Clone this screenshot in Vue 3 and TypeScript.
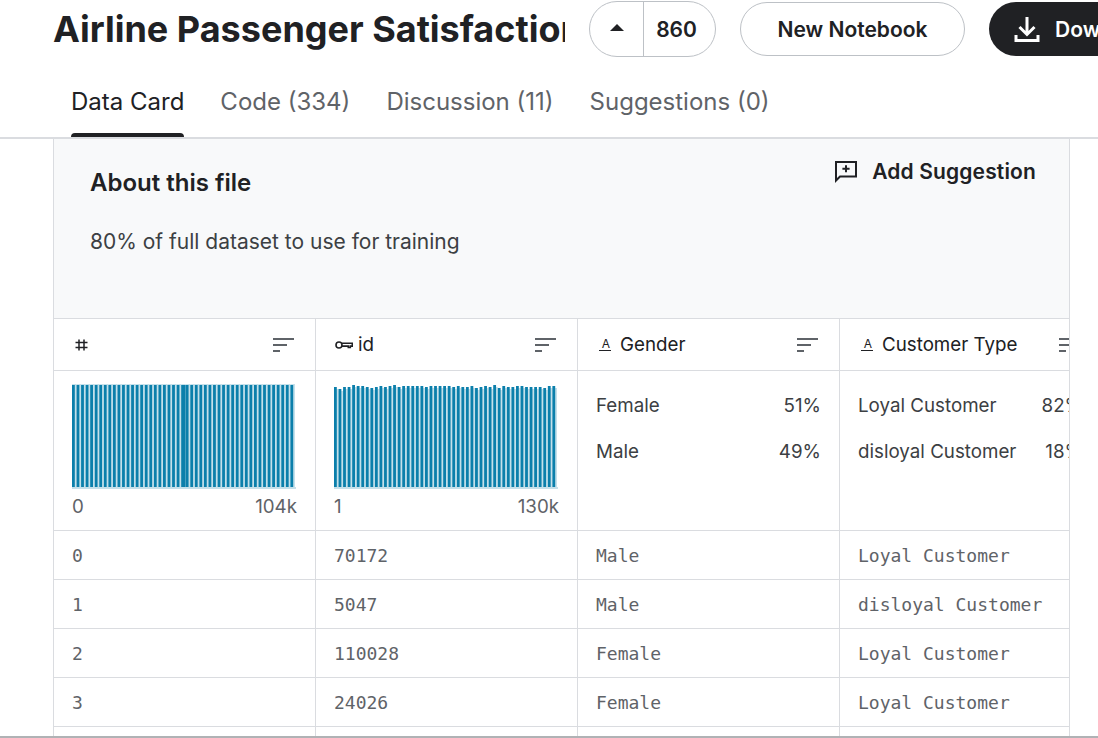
<template>
  <div class="page">
    <header class="top">
      <h1 class="title">Airline Passenger Satisfaction</h1>
      <div class="vote">
        <button class="vote-up"><span class="caret"></span></button>
        <span class="vote-count">860</span>
      </div>
      <button class="btn-outline">New Notebook</button>
      <button class="btn-dark">
        <svg class="dl-icon" viewBox="0 0 28 28" fill="none" stroke="#fff" stroke-width="3">
          <path d="M14 2v17M6.500 12l7.500 7.500 7.500-7.500" />
          <path d="M3 20v5.500h22V20" />
        </svg>
        <span>Download</span>
      </button>
    </header>

    <nav class="tabs">
      <a v-for="(tab, i) in tabs" :key="tab" class="tab" :class="{ active: i === 0 }">{{ tab }}</a>
    </nav>

    <section class="card">
      <div class="about">
        <div class="about-head">
          <h2>About this file</h2>
          <button class="suggest">
            <svg class="suggest-icon" viewBox="0 0 24 24" fill="none" stroke="#202124" stroke-width="2">
              <path d="M2 2h20v14.500H6l-4 4z" />
              <path d="M12 5.200v7M8.400 8.700h7.200" />
            </svg>
            <span>Add Suggestion</span>
          </button>
        </div>
        <p>80% of full dataset to use for training</p>
      </div>

      <div class="table">
        <div class="cell head">
          <svg class="type-icon" viewBox="0 0 18 12" fill="none" stroke="#202124" stroke-width="1.500">
            <path d="M6 0.500v11M11 0.500v11M2.500 3.500h12M2.500 8.500h12" />
          </svg>
          <span class="sort"><i></i><i></i><i></i></span>
        </div>
        <div class="cell head">
          <svg class="type-icon" viewBox="0 0 18 12" fill="none" stroke="#202124" stroke-width="1.600">
            <circle cx="4" cy="6" r="3" />
            <path d="M7 4.200h10.300v2.900h-2v1.400h-2V7.100H7" />
          </svg>
          <span class="name">id</span>
          <span class="sort"><i></i><i></i><i></i></span>
        </div>
        <div class="cell head">
          <span class="type-a">A</span>
          <span class="name">Gender</span>
          <span class="sort"><i></i><i></i><i></i></span>
        </div>
        <div class="cell head">
          <span class="type-a">A</span>
          <span class="name">Customer Type</span>
          <span class="sort"><i></i><i></i><i></i></span>
        </div>

        <div class="cell stat">
          <svg class="hist" width="225" height="106" viewBox="0 0 225 106">
            <rect x="0" y="103" width="224" height="2" fill="#c5e0ea" />
            <template v-for="(b, i) in firstBars" :key="i">
              <rect :x="b.x" :y="b.y - 1" :width="pitch" :height="b.h + 1" fill="#c4e0ea" />
              <rect :x="b.x" :y="b.y" :width="b.w" :height="b.h" fill="#0b7fab" />
            </template>
          </svg>
          <div class="range"><span>0</span><span>104k</span></div>
        </div>
        <div class="cell stat">
          <svg class="hist" width="225" height="106" viewBox="0 0 225 106">
            <rect x="0" y="103" width="224" height="2" fill="#c5e0ea" />
            <template v-for="(b, i) in idBars" :key="i">
              <rect :x="b.x" :y="b.y + 2" :width="pitch" :height="b.h - 2" fill="#c4e0ea" />
              <rect :x="b.x" :y="b.y" :width="b.w" :height="b.h" fill="#0b7fab" />
            </template>
          </svg>
          <div class="range"><span>1</span><span>130k</span></div>
        </div>
        <div class="cell stat share">
          <div class="share-row"><span>Female</span><span>51%</span></div>
          <div class="share-row"><span>Male</span><span>49%</span></div>
        </div>
        <div class="cell stat share">
          <div class="share-row"><span>Loyal Customer</span><span>82%</span></div>
          <div class="share-row"><span>disloyal Customer</span><span>18%</span></div>
        </div>

        <template v-for="row in rows" :key="row[0]">
          <div v-for="(val, j) in row" :key="j" class="cell data">{{ val }}</div>
        </template>
        <div v-for="n in 4" :key="'last' + n" class="cell data"></div>
      </div>
    </section>
  </div>
</template>

<script setup lang="ts">
const tabs = ['Data Card', 'Code (334)', 'Discussion (11)', 'Suggestions (0)']

const rows = [
  ['0', '70172', 'Male', 'Loyal Customer'],
  ['1', '5047', 'Male', 'disloyal Customer'],
  ['2', '110028', 'Female', 'Loyal Customer'],
  ['3', '24026', 'Female', 'Loyal Customer']
]

// bar tops for the id histogram, px below the top of the chart
const idTops = [
  3, 5, 3, 3, 1, 2, 2, 3, 4, 3, 2, 3, 2, 1, 3, 2, 2, 2, 2, 2, 3, 2, 2, 2, 2,
  2, 3, 2, 3, 3, 2, 4, 3, 2, 3, 1, 4, 2, 3, 3, 2, 2, 3, 3, 3, 3, 4, 2, 2
]

const pitch = 4.55
const barWidth = 2.8
const firstBars = Array.from({ length: 49 }, (_, i) => ({
  x: i * pitch,
  y: 1,
  w: i === 24 ? pitch : barWidth,
  h: 102
}))
const idBars = idTops.map((top, i) => ({
  x: i * pitch,
  y: top,
  w: barWidth,
  h: 103 - top
}))
</script>

<style>
body {
  margin: 0;
  background: #fff;
}
</style>

<style scoped>
.page {
  width: 1098px;
  height: 738px;
  overflow: hidden;
  box-sizing: border-box;
  border-bottom: 2px solid #b0b2b5;
  font-family: Inter, "Liberation Sans", sans-serif;
  color: #202124;
}

.top {
  display: flex;
  align-items: center;
  height: 58px;
  padding-left: 53px;
  white-space: nowrap;
}

.title {
  width: 512px;
  flex: none;
  margin: 0 24px 0 0;
  overflow: hidden;
  font-size: 36px;
  font-weight: 700;
  line-height: 58px;
}

button {
  font-family: inherit;
  color: inherit;
  background: none;
  border: none;
  padding: 0;
}

.vote {
  display: flex;
  flex: none;
  width: 127px;
  height: 56px;
  box-sizing: border-box;
  margin-right: 24px;
  border: 1px solid #bdc1c6;
  border-radius: 28px;
}

.vote-up {
  width: 54px;
  display: flex;
  align-items: center;
  justify-content: center;
  border-right: 1px solid #bdc1c6;
}

.caret {
  width: 0;
  height: 0;
  border-left: 7px solid transparent;
  border-right: 7px solid transparent;
  border-bottom: 7px solid #202124;
  margin-bottom: 3px;
}

.vote-count {
  flex: 1;
  padding-right: 6px;
  text-align: center;
  font-size: 21px;
  font-weight: 600;
  line-height: 56px;
}

.btn-outline {
  flex: none;
  width: 225px;
  height: 54px;
  box-sizing: border-box;
  margin-right: 24px;
  border: 1px solid #bdc1c6;
  border-radius: 27px;
  font-size: 21px;
  font-weight: 600;
}

.btn-dark {
  flex: none;
  display: flex;
  align-items: center;
  gap: 14px;
  height: 54px;
  padding: 0 24px;
  border-radius: 27px;
  background: #202124;
  color: #fff;
  font-size: 21px;
  font-weight: 600;
}

.dl-icon {
  width: 28px;
  height: 28px;
}

.tabs {
  display: flex;
  gap: 36px;
  height: 79px;
  padding-left: 71px;
  border-bottom: 2px solid #dadce0;
}

.tab {
  position: relative;
  padding-top: 29px;
  font-size: 24px;
  line-height: 30px;
  color: #5f6368;
}

.tab.active {
  color: #202124;
}

.tab.active::after {
  content: "";
  position: absolute;
  left: 0;
  right: 0;
  bottom: 0;
  height: 4px;
  background: #202124;
  border-radius: 4px 4px 0 0;
}

.card {
  width: 1017px;
  box-sizing: border-box;
  margin-left: 53px;
  border-left: 1px solid #dadce0;
  border-right: 1px solid #dadce0;
}

.about {
  height: 179px;
  box-sizing: border-box;
  padding: 16px 33px 0 36px;
  background: #f8f9fa;
}

.about-head {
  display: flex;
  justify-content: space-between;
  align-items: flex-start;
}

.about h2 {
  margin: 13px 0 0;
  font-size: 24px;
  font-weight: 600;
  line-height: 30px;
}

.suggest {
  display: flex;
  align-items: center;
  gap: 14px;
  margin-top: 1px;
  font-size: 21px;
  font-weight: 600;
  letter-spacing: 0.15px;
  line-height: 32px;
}

.suggest-icon {
  width: 24px;
  height: 24px;
}

.about p {
  margin: 29px 0 0;
  font-size: 21px;
  line-height: 30px;
  color: #3c4043;
}

.table {
  display: grid;
  grid-template-columns: 262px 262px 262px 262px;
  border-top: 1px solid #dadce0;
  overflow: hidden;
}

.cell {
  box-sizing: border-box;
  border-right: 1px solid #dadce0;
  border-bottom: 1px solid #dadce0;
  min-width: 0;
}

.head {
  display: flex;
  align-items: center;
  gap: 5px;
  height: 52px;
  padding: 0 21px 0 19px;
  font-size: 18.75px;
  white-space: nowrap;
}

.name {
  font-weight: 400;
}

.type-icon {
  flex: none;
  width: 18px;
  height: 12px;
}

.type-a {
  flex: none;
  position: relative;
  width: 18px;
  height: 14px;
  font-size: 12px;
  line-height: 11px;
  text-align: center;
  color: #202124;
}

.type-a::after {
  content: "";
  position: absolute;
  left: 2px;
  right: 4px;
  bottom: 1px;
  height: 1px;
  background: #202124;
}

.sort {
  flex: none;
  display: flex;
  flex-direction: column;
  gap: 4px;
  width: 21px;
  margin-left: auto;
}

.sort i {
  display: block;
  height: 2px;
  background: #5f6368;
}

.sort i:nth-child(2) {
  width: 14px;
}

.sort i:nth-child(3) {
  width: 7px;
}

.stat {
  height: 160px;
  padding: 13px 18px 0;
}

.hist {
  display: block;
}

.range {
  display: flex;
  justify-content: space-between;
  margin-top: 4px;
  font-size: 18.75px;
  line-height: 26px;
  color: #5f6368;
}

.share {
  padding-top: 12px;
  font-size: 18.75px;
  color: #3c4043;
}

.share-row {
  display: flex;
  justify-content: space-between;
  gap: 24px;
  height: 46px;
  line-height: 45px;
  white-space: nowrap;
}

.data {
  height: 49px;
  padding-left: 18px;
  font-family: "DejaVu Sans Mono", "Liberation Mono", monospace;
  font-size: 18px;
  line-height: 50px;
  color: #5f6368;
  white-space: nowrap;
}
</style>
